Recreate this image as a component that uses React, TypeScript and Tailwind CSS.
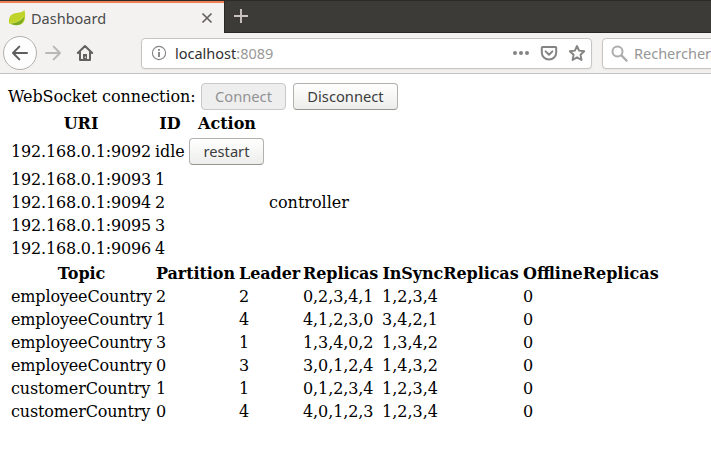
import type { ReactNode } from "react";

const ui = "font-['Noto_Sans','Open_Sans',sans-serif]";

function Button({ children, className, disabled }: { children: ReactNode; className: string; disabled?: boolean }) {
  return (
    <button
      disabled={disabled}
      className={`${ui} h-[27px] shrink-0 rounded-[4px] border text-[14.7px] leading-[25px] whitespace-nowrap ${
        disabled
          ? "border-[#c8c8c8] bg-[#eeeeee] text-[#929292]"
          : "border-[#b3b1ae] border-b-[#98958f] bg-linear-to-b from-white to-[#ededeb] text-[#3c3c3c]"
      } ${className}`}
    >
      {children}
    </button>
  );
}

const brokers = [
  ["192.168.0.1:9092", "idle", ""],
  ["192.168.0.1:9093", "1", ""],
  ["192.168.0.1:9094", "2", "controller"],
  ["192.168.0.1:9095", "3", ""],
  ["192.168.0.1:9096", "4", ""],
];

const topics = [
  ["employeeCountry", "2", "2", "0,2,3,4,1", "1,2,3,4", "0"],
  ["employeeCountry", "1", "4", "4,1,2,3,0", "3,4,2,1", "0"],
  ["employeeCountry", "3", "1", "1,3,4,0,2", "1,3,4,2", "0"],
  ["employeeCountry", "0", "3", "3,0,1,2,4", "1,4,3,2", "0"],
  ["customerCountry", "1", "1", "0,1,2,3,4", "1,2,3,4", "0"],
  ["customerCountry", "0", "4", "4,0,1,2,3", "1,2,3,4", "0"],
];

function TabBar() {
  return (
    <div className="flex h-[33px] border-t border-[#2b2a27] bg-[#3c3b37]">
      <div className="flex h-8 w-56 shrink-0 items-center border-t-2 border-[#ef7f56] bg-[#f3f2f1] pl-2">
        <svg width="18" height="18" viewBox="0 0 18 18" className="shrink-0">
          <path d="M16.4.8C17.6 6 17.8 12.5 14 14.8C10.5 17 5.5 16.2 3.2 15L1.2 14.4C.4 10.5 1.4 6.2 5.4 4.8C9.4 3.5 14 4.4 16.4.8Z" fill="#bfd32b" />
          <path d="M2.4 14.3C7.5 14.2 12.8 12.6 16.3 7.5C16 13.3 12.5 16.2 8.2 16.2C6 16.2 4.2 15.7 2.4 14.3Z" fill="#78aa28" />
          <path d="M1.2 14.2C7 14 12.5 12 16 7" fill="none" stroke="#d0de48" strokeWidth=".9" />
        </svg>
        <span className={`${ui} ml-[5px] w-[160px] shrink-0 text-[14.5px] text-[#4b4b4b]`}>Dashboard</span>
        <svg width="12" height="12" viewBox="0 0 12 12" className="ml-[10px] shrink-0">
          <path d="M1.5 1.5 10.5 10.5M10.5 1.5 1.5 10.5" fill="none" stroke="#65625f" strokeWidth="1.7" />
        </svg>
      </div>
      <div className="flex flex-1 border-b border-l border-[#292825] pt-[7px] pl-[9px]">
        <svg width="15" height="15" viewBox="0 0 15 15">
          <path d="M0 8H14M7 1V15" stroke="#cbc4c0" strokeWidth="1.9" />
        </svg>
      </div>
    </div>
  );
}

function Toolbar() {
  return (
    <div className={`${ui} flex h-[41px] items-center overflow-hidden border-b border-[#c5c4c3] bg-[#f3f2f1] pl-[3px]`}>
      <div className="flex size-[34px] shrink-0 items-center justify-center rounded-full border border-[#b1b0af] bg-[#fdfdfd]">
        <svg width="18" height="18" viewBox="0 0 18 18">
          <path d="M8.3 2.6 2 9l6.3 6.4M2 9H16" fill="none" stroke="#5e5d5c" strokeWidth="2" strokeLinecap="round" strokeLinejoin="round" />
        </svg>
      </div>
      <svg width="18" height="18" viewBox="0 0 18 18" className="ml-[7px] shrink-0">
        <path d="M9.7 2.6 16 9l-6.3 6.4M16 9H2" fill="none" stroke="#b9b8b7" strokeWidth="2" strokeLinecap="round" strokeLinejoin="round" />
      </svg>
      <svg width="18" height="18" viewBox="0 0 18 18" className="ml-[14px] shrink-0">
        <path d="M1.8 9 9 2l7.2 7M4 8v7.9h10V8" fill="none" stroke="#626160" strokeWidth="2" strokeLinecap="round" strokeLinejoin="round" />
        <path d="M7 16v-6h4v6Z" fill="#626160" />
        <path d="M9.3 12.5v1.5" stroke="#f3f2f1" />
      </svg>
      <div className="ml-[47px] flex h-[31px] w-[451px] shrink-0 items-center rounded-[4px] border border-[#c7c4c1] bg-white pl-[9px] shadow-xs">
        <svg width="16" height="16" viewBox="0 0 16 16" className="shrink-0">
          <circle cx="8" cy="8" r="6.6" fill="none" stroke="#858585" strokeWidth="1.1" />
          <path d="M8 7v5M8 4v1.7" stroke="#777" strokeWidth="1.7" />
        </svg>
        <span className="ml-2 w-[337px] text-[14.5px] whitespace-nowrap text-[#303030]">
          localhost<span className="text-[#999]">:8089</span>
        </span>
        <svg width="18" height="18" viewBox="0 0 18 18" className="shrink-0" fill="#858483">
          <circle cx="3" cy="9" r="2" />
          <circle cx="9" cy="9" r="2" />
          <circle cx="15" cy="9" r="2" />
        </svg>
        <svg width="18" height="18" viewBox="0 0 18 18" className="ml-[10px] shrink-0" fill="none" stroke="#858483" strokeWidth="2" strokeLinecap="round" strokeLinejoin="round">
          <path d="M2.5 3h13a.7.7 0 0 1 .7.7V8.5a7.2 7 0 0 1-14.4 0V3.7a.7.7 0 0 1 .7-.7Z" />
          <path d="m5.6 7.4 3.4 3.3 3.4-3.3" />
        </svg>
        <svg width="18" height="18" viewBox="0 0 18 18" className="ml-[10px] shrink-0">
          <path d="m9 2 2.1 4.6 5.1.6-3.7 3.5 1 5.3L9 13.4 4.6 16l1-5.3L1.8 7.2l5.1-.6Z" fill="none" stroke="#858483" strokeWidth="1.9" strokeLinejoin="round" />
        </svg>
      </div>
      <div className="ml-[10px] flex h-[31px] w-[160px] shrink-0 items-center rounded-[4px] border border-[#c7c4c1] bg-white pl-2 shadow-xs">
        <svg width="17" height="17" viewBox="0 0 17 17" className="shrink-0">
          <circle cx="6.5" cy="6.5" r="5" fill="none" stroke="#adacab" strokeWidth="2" />
          <path d="m10.4 10.4 5.2 5.2" stroke="#adacab" strokeWidth="2.2" strokeLinecap="round" />
        </svg>
        <span className="ml-[6px] text-[14.5px] text-[#969696]">Rechercher</span>
      </div>
    </div>
  );
}

const cell = "p-px h-[21px] whitespace-nowrap";

const topicTracking = ["tracking-[-0.15px]", "", "", "tracking-[-0.1px]", "", ""];

export default function App() {
  return (
    <div className="h-[450px] w-[711px] overflow-hidden bg-white font-['DejaVu_Serif',serif] text-base leading-[19px] text-black">
      <TabBar />
      <Toolbar />
      <main className="pt-[9px] pl-2">
        <div className="flex h-7 items-start">
          <span className="w-[193px] shrink-0 pt-1 tracking-[-0.1px] whitespace-nowrap">WebSocket connection:</span>
          <Button disabled className="w-[85px]">Connect</Button>
          <Button className="ml-[7px] w-[105px]">Disconnect</Button>
        </div>
        <table className="w-[345px] table-fixed border-separate border-spacing-[2px]">
          <colgroup>
            <col className="w-[142px]" />
            <col className="w-[32px]" />
            <col className="w-[78px]" />
            <col className="w-[83px]" />
          </colgroup>
          <thead>
            <tr>
              <th className={cell}>URI</th>
              <th className={cell}>ID</th>
              <th className={cell}>Action</th>
              <th className={cell}></th>
            </tr>
          </thead>
          <tbody>
            {brokers.map(([uri, id, role]) => (
              <tr key={uri}>
                <td className={`${cell} tracking-[-0.18px]`}>{uri}</td>
                <td className={`${cell} tracking-[-0.1px]`}>{id}</td>
                <td className={cell}>
                  {id === "idle" && (
                    <div className="flex h-[29px] items-center">
                      <Button className="w-[75px]">restart</Button>
                    </div>
                  )}
                </td>
                <td className={cell}>{role}</td>
              </tr>
            ))}
          </tbody>
        </table>
        <table className="w-[653px] table-fixed border-separate border-spacing-[2px]">
          <colgroup>
            <col className="w-[143px]" />
            <col className="w-[81px]" />
            <col className="w-[62px]" />
            <col className="w-[77px]" />
            <col className="w-[139px]" />
            <col className="w-[137px]" />
          </colgroup>
          <thead>
            <tr>
              {["Topic", "Partition", "Leader", "Replicas", "InSyncReplicas"].map((h) => (
                <th key={h} className={`${cell} tracking-[-0.08px]`}>{h}</th>
              ))}
              <th className={cell}>OfflineReplicas</th>
            </tr>
          </thead>
          <tbody>
            {topics.map((row, i) => (
              <tr key={i}>
                {row.map((value, j) => (
                  <td key={j} className={`${cell} ${topicTracking[j]}`}>{value}</td>
                ))}
              </tr>
            ))}
          </tbody>
        </table>
      </main>
    </div>
  );
}
